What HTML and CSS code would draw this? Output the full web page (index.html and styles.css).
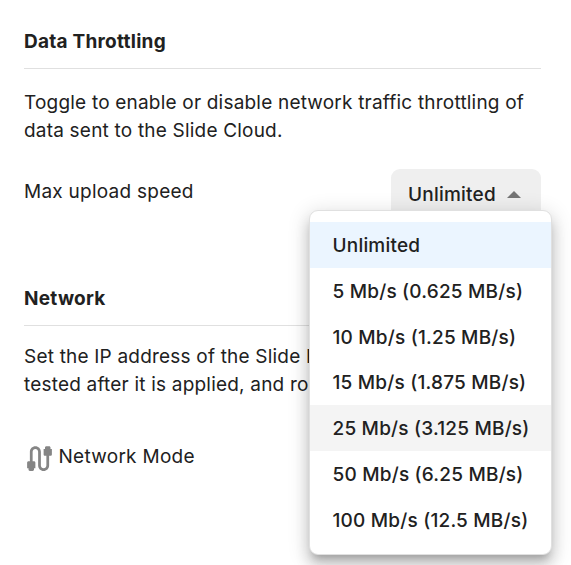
FILE: index.html
```html
<!DOCTYPE html>
<html lang="en">
<head>
<meta charset="utf-8">
<title>Device settings</title>
<link rel="stylesheet" href="styles.css">
</head>
<body>
<main class="settings">
  <section class="section throttling">
    <h2>Data Throttling</h2>
    <p>Toggle to enable or disable network traffic throttling of data sent to the Slide Cloud.</p>
    <div class="speed-row">
      <span class="label">Max upload speed</span>
      <div class="select">
        <button class="trigger" type="button">Unlimited
          <svg class="arrow" viewBox="0 0 14 7"><path d="M0 7 7 0l7 7z"/></svg>
        </button>
        <ul class="menu">
          <li class="selected">Unlimited</li>
          <li>5 Mb/s (0.625 MB/s)</li>
          <li>10 Mb/s (1.25 MB/s)</li>
          <li>15 Mb/s (1.875 MB/s)</li>
          <li class="hovered">25 Mb/s (3.125 MB/s)</li>
          <li>50 Mb/s (6.25 MB/s)</li>
          <li>100 Mb/s (12.5 MB/s)</li>
        </ul>
      </div>
    </div>
  </section>
  <section class="section network">
    <h2>Network</h2>
    <p>Set the IP address of the Slide B<br>tested after it is applied, and ro</p>
    <div class="mode-row">
      <svg class="cable" viewBox="0 0 24 24"><path d="M20 5V4c0-.55-.45-1-1-1h-2c-.55 0-1 .45-1 1v1h-1v4c0 .55.45 1 1 1h1v7c0 1.100-.9 2-2 2s-2-.9-2-2V7c0-2.210-1.790-4-4-4S5 4.790 5 7v7H4c-.55 0-1 .45-1 1v4h1v1c0 .55.45 1 1 1h2c.55 0 1-.45 1-1v-1h1v-4c0-.55-.45-1-1-1H7V7c0-1.100.9-2 2-2s2 .9 2 2v10c0 2.210 1.790 4 4 4s4-1.790 4-4v-7h1c.55 0 1-.45 1-1V5h-1z"/></svg>
      <span class="label">Network Mode</span>
    </div>
  </section>
</main>
</body>
</html>
```
FILE: styles.css
```css
* { box-sizing: border-box; }
body {
  margin: 0;
  height: 565px;
  overflow: hidden;
  background: #fff;
  color: #212121;
  font: 400 19px/28px Inter, sans-serif;
  letter-spacing: 0.2px;
}
.settings { width: 541px; padding: 28px 0 0 24px; }
h2 {
  margin: 0;
  height: 41px;
  border-bottom: 1px solid #e0e0e0;
  font-size: 19px;
  font-weight: 700;
  line-height: 28px;
  letter-spacing: 0.25px;
}
p { margin: 20px 0 0; }
.speed-row {
  display: flex;
  justify-content: space-between;
  align-items: flex-start;
  margin-top: 24px;
}
.speed-row .label { margin-top: 9px; letter-spacing: 0.25px; }
.select { position: relative; }
.trigger {
  display: flex;
  align-items: center;
  gap: 11.500px;
  width: 150px;
  height: 50px;
  padding: 1px 0 0 17px;
  border: 0;
  border-radius: 9px;
  background: #efefef;
  color: #212121;
  font: 500 19px/28px Inter, sans-serif;
  letter-spacing: 0.22px;
}
.arrow { width: 14px; height: 7px; margin-top: -1px; fill: #757575; }
.menu {
  position: absolute;
  top: 41px;
  right: -11px;
  z-index: 1;
  width: 243px;
  height: 345px;
  margin: 0;
  padding: 11px 0;
  border: 1px solid #e0e0e0;
  border-radius: 9px;
  background: #fff;
  list-style: none;
  font-weight: 500;
  box-shadow: 0 7px 7px -4px rgba(0,0,0,.2), 0 11px 14px 1px rgba(0,0,0,.14), 0 4px 20px 3px rgba(0,0,0,.12);
}
.menu li { height: 45.800px; padding-left: 22.500px; line-height: 47px; white-space: nowrap; }
.menu .selected { background: #ebf5ff; }
.menu .hovered { background: #f4f4f4; }
.network { margin-top: 66px; }
.network p { margin-top: 17px; white-space: nowrap; }
.mode-row { display: flex; align-items: flex-start; gap: 2.500px; margin-top: 42px; }
.mode-row .label { margin-top: 2px; letter-spacing: 0.28px; }
.cable { width: 33px; height: 33px; margin-left: -1px; margin-top: 0.500px; fill: #858585; }
```
